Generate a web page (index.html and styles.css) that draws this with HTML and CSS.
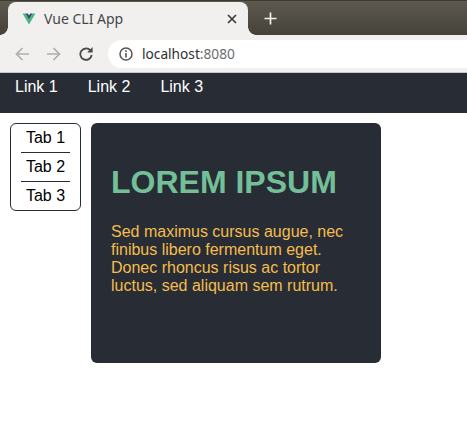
FILE: index.html
```html
<!DOCTYPE html>
<html lang="en">
<head>
    <meta charset="UTF-8">
    <title>Vue CLI App</title>
    <link rel="stylesheet" href="styles.css">
</head>
<body>
<!--浏览器标签栏-->
<div class="tabstrip">
    <div class="browser-tab">
        <svg class="favicon" width="14" height="12" viewBox="0 0 16 14">
            <path d="M0.5 0.5H4L8 7.5L12 0.5H15.5L8 13.5Z" fill="#41b883"/>
            <path d="M4 0.5H6.6L8 3L9.4 0.5H12L8 7.5Z" fill="#35495e"/>
        </svg>
        <span class="tab-title">Vue CLI App</span>
        <svg class="tab-close" width="10" height="10" viewBox="0 0 10 10">
            <path d="M1 1L9 9M9 1L1 9" stroke="#3c3c3c" stroke-width="1.7"/>
        </svg>
    </div>
    <svg class="new-tab" width="13" height="13" viewBox="0 0 13 13">
        <path d="M6.5 0.5V12.5M0.5 6.5H12.5" stroke="#f1f1f1" stroke-width="1.7"/>
    </svg>
</div>
<!--地址栏-->
<div class="toolbar">
    <div class="tools">
        <svg width="14" height="14" viewBox="0 0 14 14">
            <path d="M14 7H1.5M7.5 1L1.5 7L7.5 13" fill="none" stroke="#aeaeae" stroke-width="1.7"/>
        </svg>
        <svg width="14" height="14" viewBox="0 0 14 14">
            <path d="M0 7H12.5M6.5 1L12.5 7L6.5 13" fill="none" stroke="#aeaeae" stroke-width="1.7"/>
        </svg>
        <svg width="14" height="14" viewBox="0 0 14 14">
            <path d="M11.5 3.6A5.7 5.7 0 1 0 12.7 8" fill="none" stroke="#4a4a4a" stroke-width="1.8"/>
            <path d="M8.2 5.4H13.6V0Z" fill="#4a4a4a"/>
        </svg>
    </div>
    <div class="omnibox">
        <svg class="info" width="14" height="14" viewBox="0 0 14 14">
            <circle cx="7" cy="7" r="6" fill="none" stroke="#555555" stroke-width="1.5"/>
            <path d="M7 6V10.5M7 3.3V5" stroke="#555555" stroke-width="1.6"/>
        </svg>
        <span class="host">localhost</span><span class="port">:8080</span>
    </div>
</div>
<!--页面内容-->
<nav class="navbar">
    <a class="nav-link">Link 1</a>
    <a class="nav-link">Link 2</a>
    <a class="nav-link">Link 3</a>
</nav>
<div class="content">
    <ul class="tabs">
        <li>Tab 1</li>
        <li>Tab 2</li>
        <li>Tab 3</li>
    </ul>
    <section class="card">
        <h1>LOREM IPSUM</h1>
        <p>Sed maximus cursus augue, nec finibus libero fermentum eget. Donec rhoncus risus ac tortor luctus, sed aliquam sem rutrum.</p>
    </section>
</div>
</body>
</html>
```

FILE: styles.css
```css
body {
    margin: 0;
    height: 421px;
    overflow: hidden;
    background: white;
    font-family: "Liberation Sans", Arial, sans-serif;
}

/*浏览器标签栏*/
.tabstrip {
    height: 35px;
    box-sizing: border-box;
    padding: 1px 0 0 8px;
    display: flex;
    align-items: center;
    background: linear-gradient(#5d594f, #45423a);
    border-top: 1px solid #3c3a33;
}

.browser-tab {
    position: relative;
    width: 240px;
    height: 33px;
    align-self: flex-start;
    box-sizing: border-box;
    padding: 0 11px 0 14px;
    display: flex;
    align-items: center;
    background: #f1f0ee;
    border-radius: 8px 8px 0 0;
}

/*标签两侧的圆角过渡*/
.browser-tab::before,
.browser-tab::after {
    content: '';
    position: absolute;
    bottom: 0;
    width: 8px;
    height: 8px;
}

.browser-tab::before {
    left: -8px;
    background: radial-gradient(circle at 0 0, transparent 7.5px, #f1f0ee 8px);
}

.browser-tab::after {
    right: -8px;
    background: radial-gradient(circle at 100% 0, transparent 7.5px, #f1f0ee 8px);
}

.favicon {
    margin-right: 8px;
}

.tab-title {
    flex: 1;
    font-family: "Noto Sans", sans-serif;
    font-size: 14px;
    color: #45474a;
}

.new-tab {
    margin-left: 16px;
}

/*地址栏*/
.toolbar {
    height: 38px;
    box-sizing: border-box;
    padding-left: 15px;
    display: flex;
    align-items: center;
    gap: 15px;
    background: #f1f0ee;
    border-bottom: 1px solid #c8c8c6;
}

.tools {
    display: flex;
    gap: 18px;
}

.omnibox {
    flex: 1;
    height: 28px;
    padding-left: 11px;
    display: flex;
    align-items: center;
    background: white;
    border-radius: 14px 0 0 14px;
    font-family: "Noto Sans", sans-serif;
    font-size: 13.7px;
}

.info {
    margin-right: 9px;
}

.host {
    color: #2f2f2f;
}

.port {
    color: #6d6d6d;
}

/*顶部导航*/
.navbar {
    height: 40px;
    padding-left: 15px;
    display: flex;
    gap: 30px;
    background: #282c34;
}

.nav-link {
    font-size: 16px;
    line-height: 27px;
    color: white;
}

/*左侧选项卡和右侧卡片*/
.content {
    padding: 10px;
    display: flex;
    align-items: flex-start;
    gap: 10px;
}

.tabs {
    width: 71px;
    box-sizing: border-box;
    margin: 0;
    padding: 0 10px;
    list-style-type: none;
    border: 1px solid #282c34;
    border-radius: 6px;
}

.tabs li {
    height: 28px;
    font-size: 16px;
    line-height: 27px;
    text-align: center;
    color: black;
}

.tabs li + li {
    border-top: 1px solid #282c34;
}

.card {
    width: 290px;
    height: 240px;
    box-sizing: border-box;
    padding: 20px;
    background: #282c34;
    border-radius: 6px;
}

.card h1 {
    margin: 21px 0 0;
    font-size: 32px;
    line-height: 37px;
    color: #72bf98;
}

.card p {
    margin: 22px 0 0;
    font-size: 16px;
    line-height: 18px;
    color: #f4bd4e;
}
```
